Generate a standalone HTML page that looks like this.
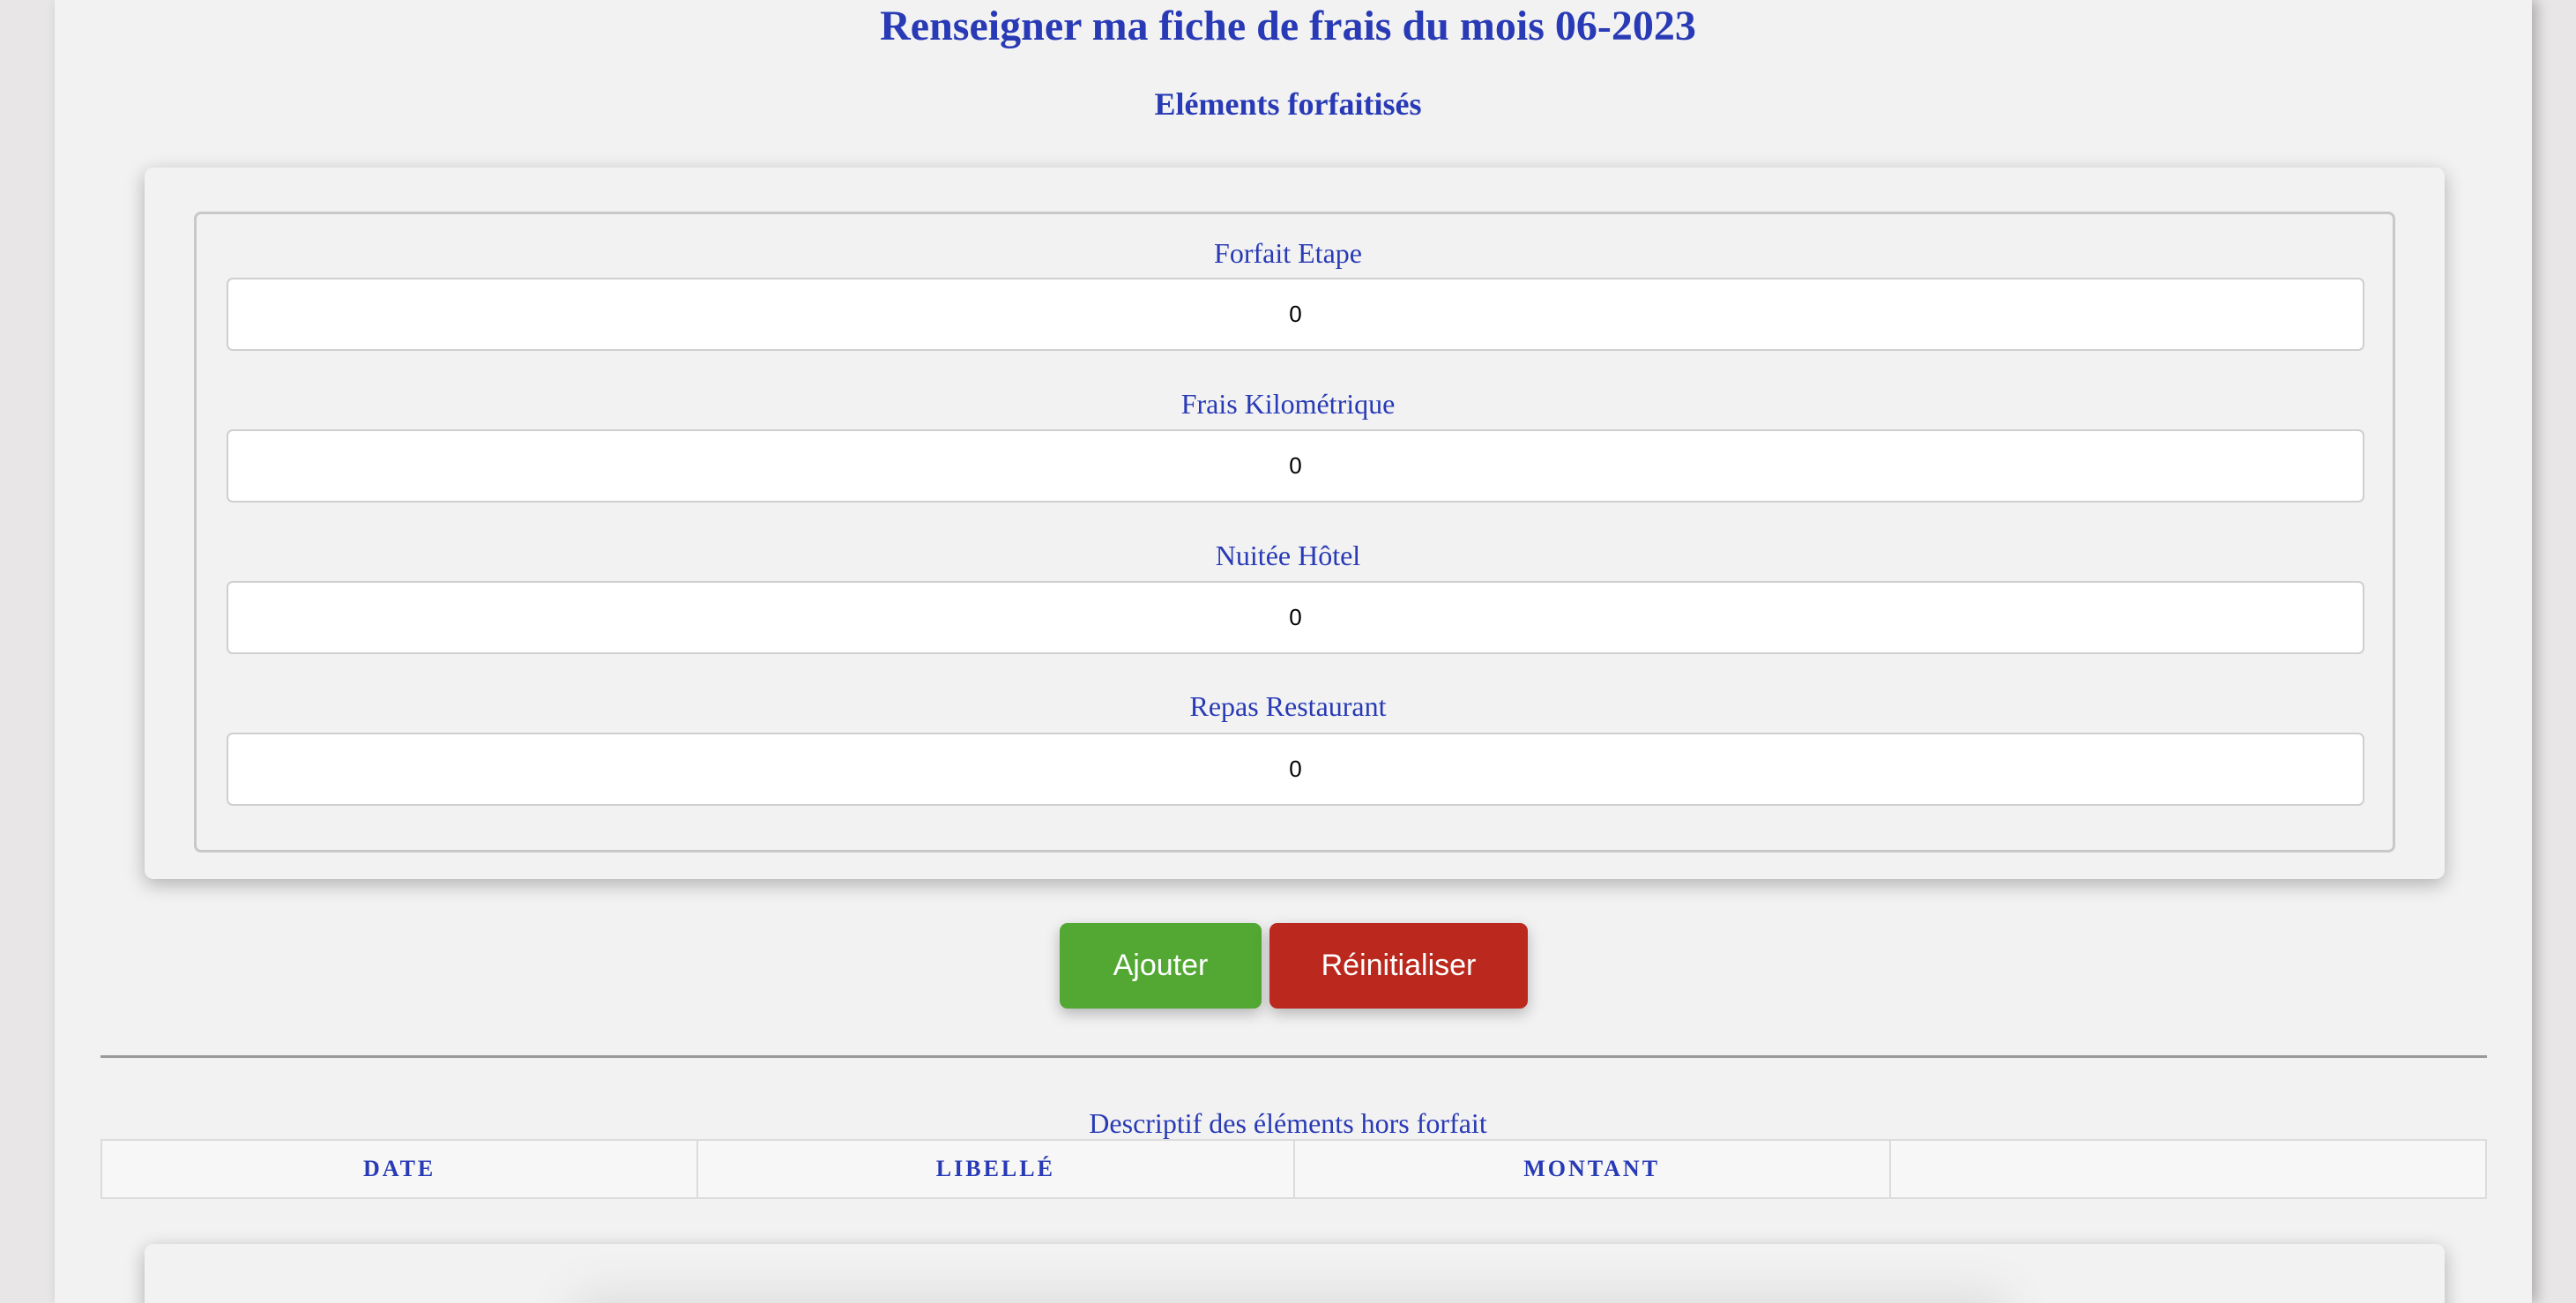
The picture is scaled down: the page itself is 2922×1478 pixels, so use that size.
<!DOCTYPE html>
<html><head><meta charset="utf-8"><style>
html,body{margin:0;padding:0;width:2922px;height:1478px;overflow:hidden;background:#e8e6e6;}
body{position:relative;font-family:"Liberation Serif",serif;color:#283ab5;}
.cont{position:absolute;left:62px;top:0;width:2810px;height:1478px;background:#f2f2f2;box-shadow:6px 0 14px rgba(0,0,0,.25);}
.abs{position:absolute;}
h1{position:absolute;left:0;width:2922px;top:0;margin:0;text-align:center;font-size:48px;line-height:60px;font-weight:bold;}
h2{position:absolute;left:0;width:2922px;top:96px;margin:0;text-align:center;font-size:36px;line-height:44px;font-weight:bold;}
.card{position:absolute;left:164px;width:2609px;background:#f2f2f2;border-radius:10px;box-shadow:0 6px 22px rgba(0,0,0,.28);}
.fs{position:absolute;left:220px;top:240px;width:2491px;height:721px;border:3px solid #c8c8c8;border-radius:8px;}
.lbl{position:absolute;left:0;width:2922px;text-align:center;font-size:32px;line-height:40px;}
.inp{position:absolute;left:257px;width:2421px;height:79px;background:#fff;border:2px solid #cfcfcf;border-radius:7px;text-align:center;font-family:"Liberation Sans",sans-serif;font-size:26px;line-height:79px;color:#000;}
.btn{position:absolute;top:1047px;height:97px;border-radius:9px;color:#fff;font-family:"Liberation Sans",sans-serif;font-size:34px;line-height:97px;text-align:center;box-shadow:0 6px 16px rgba(0,0,0,.25);}
table{position:absolute;left:114px;top:1292px;width:2707px;height:68px;border-collapse:collapse;background:#f7f7f7;}
td{border:2px solid #dcdcdc;text-align:center;font-weight:bold;font-size:26px;letter-spacing:3px;width:25%;padding:0;}
.clip{position:absolute;left:0;top:1380px;width:2922px;height:98px;overflow:hidden;}
</style></head><body>
<div class="cont"></div>
<h1>Renseigner ma fiche de frais du mois 06-2023</h1>
<h2>Eléments forfaitisés</h2>
<div class="card" style="top:190px;height:807px;"></div>
<div class="fs"></div>
<div class="lbl" style="top:267px">Forfait Etape</div>
<div class="inp" style="top:315px">0</div>
<div class="lbl" style="top:438px">Frais Kilométrique</div>
<div class="inp" style="top:487px">0</div>
<div class="lbl" style="top:610px">Nuitée Hôtel</div>
<div class="inp" style="top:659px">0</div>
<div class="lbl" style="top:781px">Repas Restaurant</div>
<div class="inp" style="top:831px">0</div>
<div class="btn" style="left:1202px;width:229px;background:#52a833;">Ajouter</div>
<div class="btn" style="left:1440px;width:293px;background:#bb281e;">Réinitialiser</div>
<div class="abs" style="left:114px;top:1197px;width:2707px;height:3px;background:#9a9a9a;"></div>
<div class="lbl" style="top:1254px">Descriptif des éléments hors forfait</div>
<table><tr><td>DATE</td><td>LIBELLÉ</td><td>MONTANT</td><td></td></tr></table>
<div class="clip">
<div class="card" style="top:31px;height:200px;overflow:hidden;">
<div class="abs" style="left:520px;top:90px;width:1560px;height:100px;background:#d8d8d8;box-shadow:0 0 50px 30px #dadada;"></div>
</div>
</div>
</body></html>
